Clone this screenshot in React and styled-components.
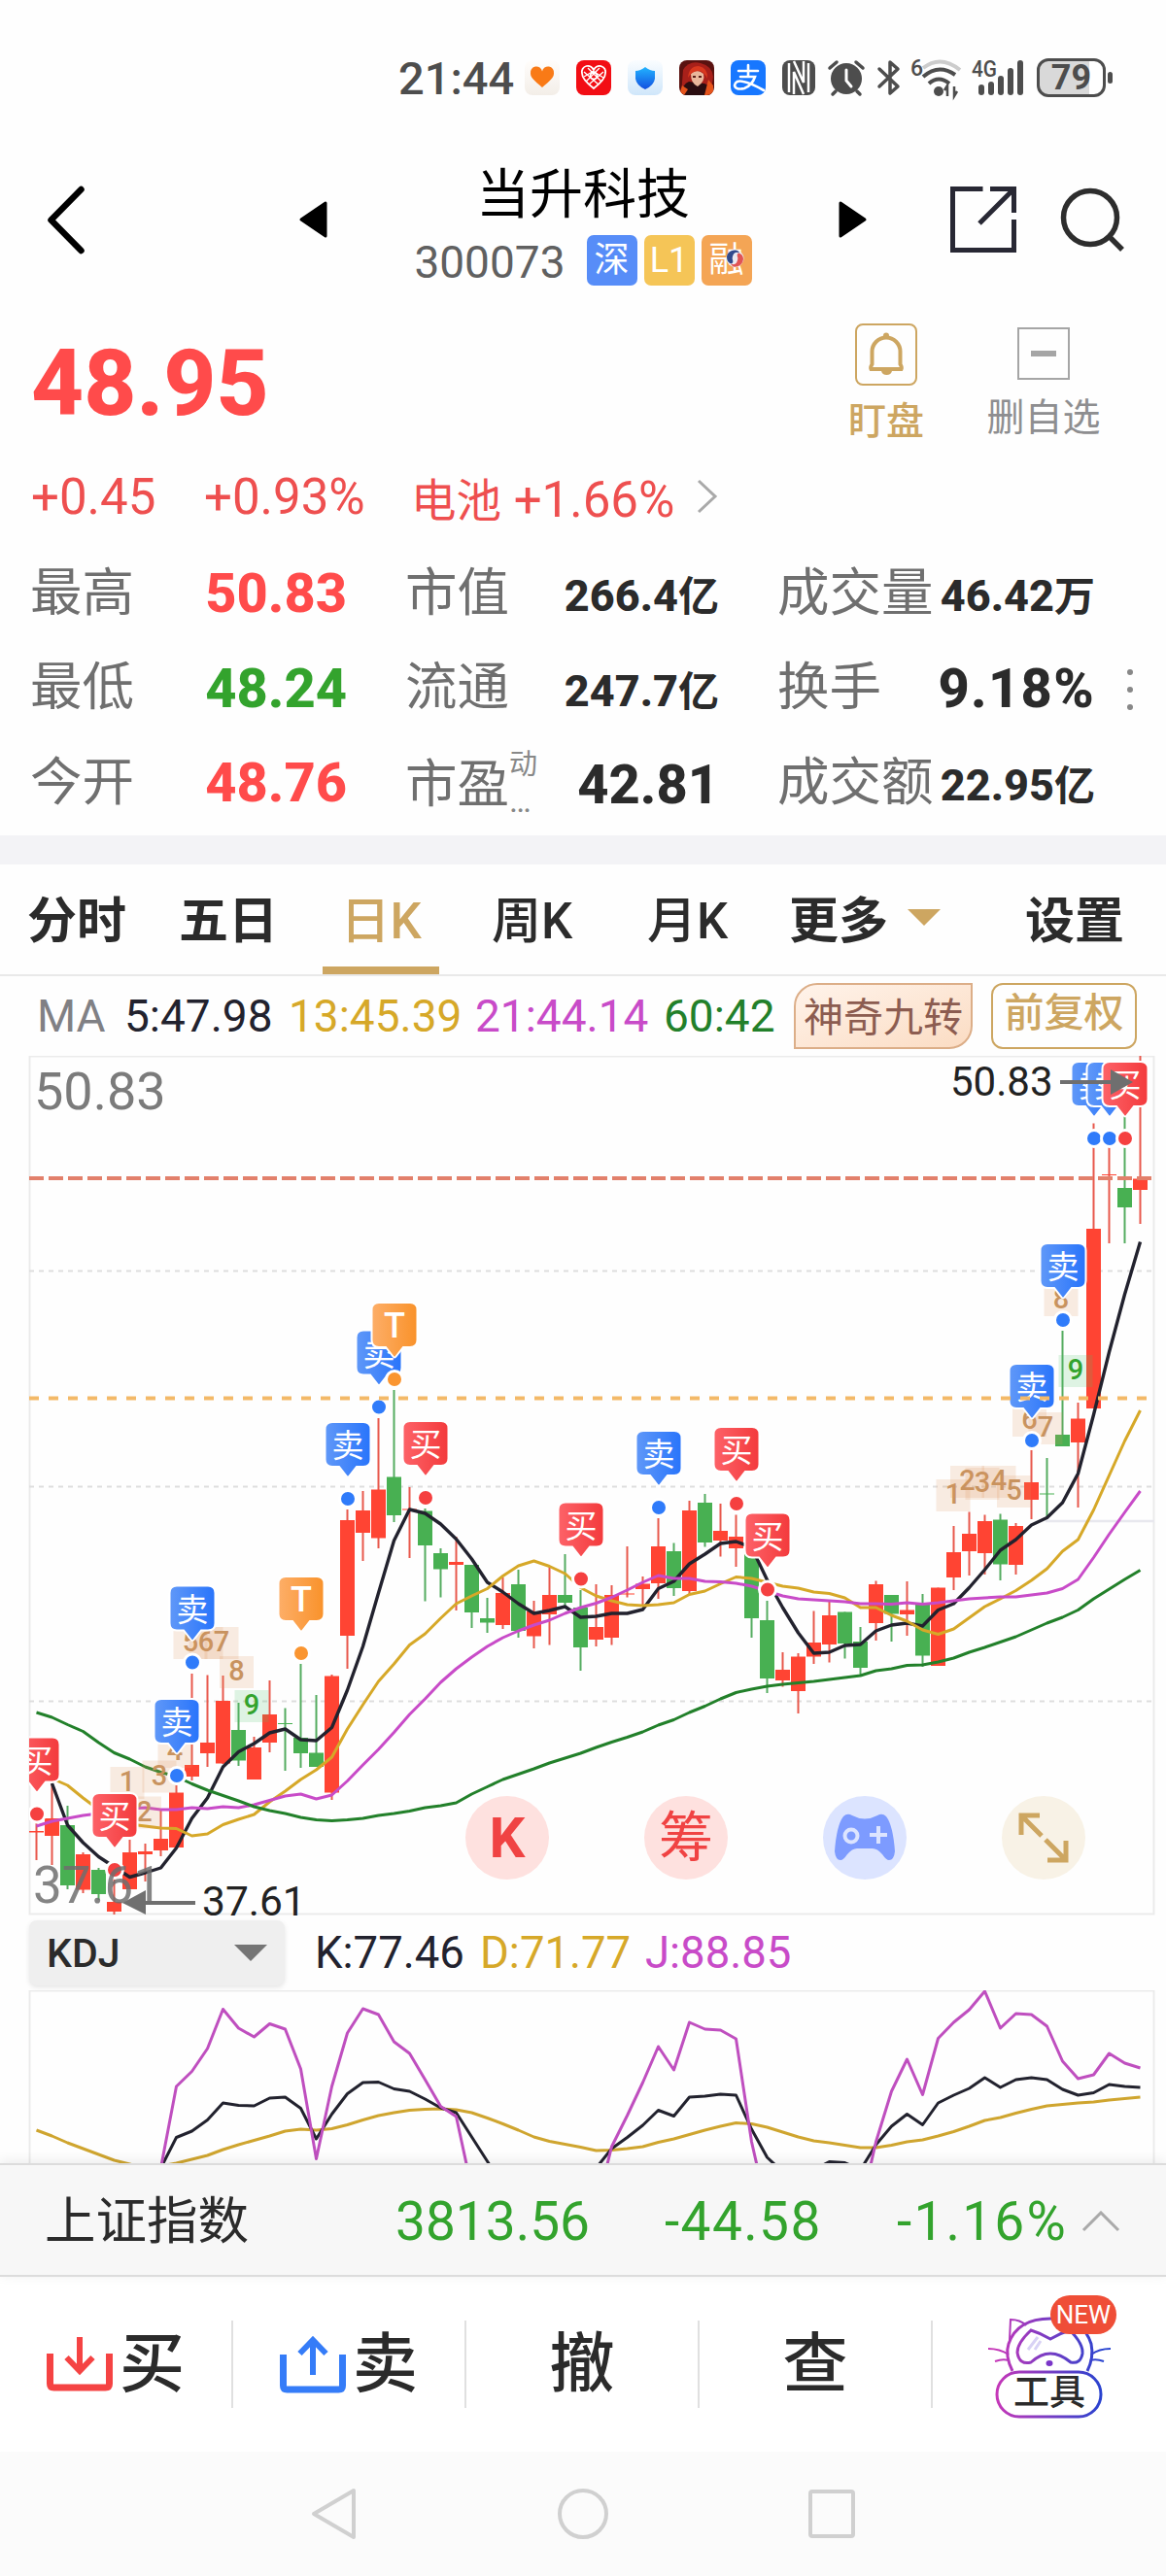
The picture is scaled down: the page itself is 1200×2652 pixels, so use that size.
import React from 'react'
import styled, { createGlobalStyle, css } from 'styled-components'

const GlobalStyle = createGlobalStyle`
  * {
    box-sizing: border-box;
  }
  body {
    margin: 0;
    background: #fefefe;
    font-family: Roboto, 'Noto Sans CJK SC', sans-serif;
    color: #2b2b2b;
  }
  svg {
    display: block;
    flex: none;
  }
`

const RED = '#ff4b4b'
const GREEN = '#33a32d'
const GOLD = '#cda661'
const INK = '#22222e'
const YELLOW = '#d6a828'
const PURPLE = '#c84bc8'
const FOREST = '#22802a'

const Screen = styled.div`
  width: 1200px;
  height: 2652px;
  overflow: hidden;
  display: flex;
  flex-direction: column;
  white-space: nowrap;
`

/* ---------- status bar ---------- */

const StatusBar = styled.div`
  display: flex;
  align-items: center;
  height: 140px;
  padding: 20px 0 0 410px;
  color: #4d4d4d;
`

const Clock = styled.div`
  width: 130px;
  font-size: 47px;
  font-weight: 500;
  line-height: 1;
`

const AppIcon = styled.div`
  flex: none;
  width: 36px;
  height: 36px;
  margin-right: 17px;
  border-radius: 8px;
  overflow: hidden;
  background: ${props => props.bg};
`

const StatusSlot = styled.div`
  flex: none;
  width: ${props => props.width}px;

  & > svg {
    overflow: visible;
  }
`

const Battery = styled.div`
  position: relative;
  width: 71px;
  height: 40px;
  border: 3px solid #4d4d4d;
  border-radius: 12px;
  background: linear-gradient(90deg, #d9d9d9 79%, #fff 79%);
  font-size: 36px;
  font-weight: 700;
  line-height: 35px;
  text-align: center;

  &::after {
    content: '';
    position: absolute;
    right: -10px;
    top: 11px;
    width: 5px;
    height: 12px;
    border-radius: 3px;
    background: #4d4d4d;
  }
`

/* ---------- header ---------- */

const Header = styled.header`
  display: flex;
  align-items: flex-start;
  height: 170px;
  padding: 49px 39px 0 47px;
`

const HeaderSlot = styled.div`
  width: ${props => props.width}px;
  padding-top: ${props => props.top || 0}px;
`

const Title = styled.div`
  width: 551px;
  margin-top: -29px;
  text-align: center;
  padding-right: 34px;
`

const Name = styled.div`
  font-size: 55px;
  line-height: 80px;
  color: #000;
`

const CodeRow = styled.div`
  display: flex;
  justify-content: center;
  align-items: center;
  gap: 7px;
  margin-top: 2px;
  height: 52px;
  font-size: 46px;
  color: #606060;

  & > span {
    margin-right: 15px;
    padding-top: 3px;
  }
`

const Tag = styled.div`
  position: relative;
  width: 52px;
  height: 52px;
  border-radius: 7px;
  background: ${props => props.bg};
  color: #fff;
  font-size: 36px;
  line-height: 52px;
  text-align: center;

  & > svg {
    position: absolute;
    left: 25px;
    top: 14px;
  }
`

/* ---------- quote ---------- */

const Quote = styled.section`
  display: flex;
  height: 150px;
  padding: 0 34px 0 32px;
`

const Price = styled.div`
  flex: 1;
  font-size: 94px;
  font-weight: 800;
  line-height: 171px;
  color: ${RED};
`

const QuoteAction = styled.div`
  display: flex;
  flex-direction: column;
  align-items: center;
  width: ${props => props.width}px;
  padding-top: ${props => props.top}px;
  font-size: 39px;
  line-height: 60px;
  font-weight: ${props => props.weight || 400};
  color: ${props => props.color};
  gap: ${props => props.gap}px;
`

const ChangeRow = styled.div`
  display: flex;
  align-items: center;
  height: 102px;
  padding-left: 32px;
  font-size: 51px;
  color: #ee4f4f;
`

const Change = styled.span`
  width: ${props => props.width}px;

  & > b {
    font-size: 46.5px;
    font-weight: 400;
  }
`

const Stats = styled.section`
  position: relative;
  display: grid;
  grid-template-columns: 326px 323px 327px;
  grid-auto-rows: 97.5px;
  column-gap: 60px;
  height: 298px;
  padding: 0 0 0 31px;
`

const Stat = styled.div`
  display: flex;
  justify-content: space-between;
  align-items: center;
  padding-top: ${props => (props.low ? 4 : 0)}px;
`

const StatLabel = styled.div`
  display: flex;
  font-size: 53.5px;
  line-height: 80px;
  color: #6f6f6f;
`

const StatNote = styled.div`
  display: flex;
  flex-direction: column;
  justify-content: space-between;
  font-size: 29px;
  line-height: 38px;
  color: #888;

  & > i {
    font-style: normal;
    font-size: 34px;
    line-height: 20px;
    padding-bottom: 14px;
  }
`

const StatValue = styled.div`
  font-size: ${props => (props.small ? 45 : 56)}px;
  font-weight: 800;
  line-height: 80px;
  letter-spacing: ${props => props.tracking || 0}px;
  padding-top: ${props => (props.small ? 8 : 1)}px;
  color: ${props => props.color || '#2b2b2b'};

  & > span {
    font-size: 42px;
    font-weight: 700;
  }
`

const MoreDots = styled.div`
  position: absolute;
  left: 1160px;
  top: 127px;
  display: grid;
  gap: 12px;

  & > i {
    width: 6px;
    height: 6px;
    border-radius: 50%;
    background: #888;
  }
`

const Band = styled.div`
  height: 30px;
  background: #f3f3f6;
`

/* ---------- period tabs ---------- */

const Tabs = styled.nav`
  display: flex;
  height: 115px;
  padding-left: 28px;
  border-bottom: 2px solid #e9e9e9;
`

const Tab = styled.div`
  display: flex;
  align-items: center;
  width: ${props => props.width}px;
  padding-bottom: 5px;
  font-size: 51px;
  font-weight: ${props => (props.heavy ? 700 : 500)};
  color: #2b2b2b;

  ${props =>
    props.active &&
    css`
      justify-content: center;
      color: ${GOLD};
      margin-right: 54px;
      border-bottom: 8px solid ${GOLD};
      padding: 8px 0 5px;
    `};
`

const Caret = styled.i`
  margin-left: ${props => props.gap || 0}px;
  border: 17px solid transparent;
  border-top-color: ${props => props.color};
  border-bottom: 0;
`

/* ---------- indicators ---------- */

const MaRow = styled.div`
  display: flex;
  align-items: center;
  height: 82px;
  padding-left: 38px;
  font-size: 46px;
`

const Value = styled.span`
  width: ${props => props.width}px;
  letter-spacing: ${props => props.tracking || 0}px;
  color: ${props => props.color};
`

const NineTurn = styled.div`
  width: 184px;
  height: 68px;
  margin-right: 19px;
  border: 2px solid #dcae88;
  border-radius: 24px 0;
  background: linear-gradient(160deg, #fff3ea, #fbdcc3);
  color: #8c5c50;
  font-size: 41px;
  line-height: 68px;
  text-align: center;
`

const Adjust = styled.div`
  width: 150px;
  height: 68px;
  border: 2px solid ${GOLD};
  border-radius: 12px;
  color: ${GOLD};
  font-size: 41px;
  font-weight: 500;
  line-height: 59px;
  text-align: center;
`

const ChartBox = styled.div`
  position: relative;
  height: 885px;
`

const FloatButtons = styled.div`
  position: absolute;
  left: 479px;
  top: 762px;
  display: flex;
  gap: 98px;
`

const FloatButton = styled.div`
  display: flex;
  align-items: center;
  justify-content: center;
  width: 86px;
  height: 86px;
  border-radius: 50%;
  background: ${props => props.bg};
  color: #f04343;
  font-size: ${props => props.size || 56}px;
  font-weight: ${props => props.weight || 400};
  line-height: 86px;
`

const KdjRow = styled.div`
  display: flex;
  align-items: center;
  height: 77px;
  padding-left: 30px;
  font-size: 45.5px;
`

const Select = styled.div`
  display: flex;
  align-items: center;
  justify-content: space-between;
  width: 263px;
  height: 67px;
  margin-right: 31px;
  padding: 0 18px;
  border-radius: 8px;
  background: #efefef;
  box-shadow: 0 2px 5px rgba(0, 0, 0, 0.1);
  font-size: 41px;
  font-weight: 500;
`

/* ---------- bottom ---------- */

const IndexBar = styled.div`
  position: relative;
  display: flex;
  align-items: center;
  height: 117px;
  padding: 3px 0 0 46px;
  border-top: 2px solid #dcdcdc;
  border-bottom: 2px solid #dcdcdc;
  background: #f7f7f7;
  box-shadow: 0 -2px 12px rgba(0, 0, 0, 0.08);
  font-size: 55px;
  color: ${GREEN};
`

const IndexName = styled.div`
  width: 361px;
  font-size: 52.5px;
  line-height: 80px;
  color: #2b2b2b;
`

const Actions = styled.div`
  display: flex;
  align-items: center;
  height: 180px;
  background: #fff;
`

const Action = styled.div`
  display: flex;
  align-items: center;
  justify-content: center;
  gap: 7px;
  width: 240px;
  height: 90px;
  border-right: ${props => (props.last ? 0 : '2px solid #e0e0e0')};
  font-size: 67px;
  font-weight: 500;
  line-height: 92px;
`

const Tool = styled.div`
  position: relative;
  width: 130px;
  height: 128px;
  margin-top: -14px;
  font-size: 37px;
`

const ToolLabel = styled.div`
  position: absolute;
  left: 11px;
  top: 77px;
  width: 108px;
  line-height: 48px;
  text-align: center;
`

const NewBadge = styled.div`
  position: absolute;
  left: 66px;
  top: 0;
  width: 68px;
  height: 40px;
  border-radius: 20px;
  background: #ef4e37;
  color: #fff;
  font-size: 26px;
  font-weight: 400;
  line-height: 41px;
  text-align: center;
`

const NavBar = styled.div`
  display: flex;
  align-items: center;
  justify-content: center;
  gap: 205px;
  height: 128px;
  background: #fbfbfb;
`

/* ---------- chart data, in pixels of the screen ---------- */

// [direction, body top, body bottom, high, low]
const candles = [
  ['u', 1885, 1886.5, 1871, 1915], ['u', 1872, 1890, 1836, 1920], ['d', 1879, 1941, 1859, 1945],
  ['u', 1909, 1945.5, 1907, 1949], ['d', 1925, 1950, 1923, 1956], ['u', 1958, 1968, 1934, 1971],
  ['u', 1907, 1945, 1894, 1945], ['u', 1906, 1909, 1898, 1937], ['u', 1893, 1905, 1862, 1911],
  ['u', 1845.5, 1902, 1838, 1902], ['u', 1817, 1829, 1723, 1833], ['u', 1794, 1805, 1724.5, 1819],
  ['u', 1751, 1815.5, 1725, 1816], ['d', 1781, 1812.5, 1753, 1818], ['u', 1799, 1832, 1788, 1832],
  ['u', 1765, 1794, 1730, 1804], ['d', 1774, 1775, 1758.5, 1823], ['d', 1789, 1805, 1713, 1820],
  ['d', 1804.5, 1819, 1745, 1819], ['u', 1725.5, 1845.5, 1724, 1853], ['u', 1565, 1684, 1554, 1718],
  ['u', 1555, 1578, 1535, 1607], ['u', 1533.5, 1583.5, 1460, 1594], ['d', 1520.5, 1560, 1431, 1567],
  ['u', 1553.5, 1554.5, 1531, 1604], ['d', 1555.5, 1591, 1553, 1648.5], ['d', 1599, 1615.5, 1594, 1644.5],
  ['u', 1608, 1611, 1582, 1658], ['d', 1611, 1660, 1611, 1676], ['d', 1666, 1670.5, 1645, 1681],
  ['u', 1640, 1673, 1624, 1677], ['d', 1631, 1679, 1616, 1686], ['u', 1659, 1684.5, 1648, 1697],
  ['u', 1642, 1662, 1613.5, 1693.5], ['d', 1642, 1650, 1600, 1655], ['d', 1655, 1696, 1637, 1720],
  ['u', 1675, 1688, 1631, 1695], ['u', 1642, 1686, 1632, 1693.5], ['u', 1640.5, 1641.5, 1592, 1644.5],
  ['u', 1630.5, 1636, 1623, 1653], ['u', 1592, 1630, 1563, 1646], ['d', 1597, 1635, 1588.5, 1643],
  ['u', 1555, 1638, 1545, 1641], ['d', 1547, 1588, 1538, 1592.5], ['u', 1576, 1586, 1548, 1602.5],
  ['u', 1582, 1594, 1559.5, 1613], ['d', 1590, 1666, 1590, 1686], ['d', 1668, 1728, 1648, 1743],
  ['u', 1719, 1730, 1701, 1736.5], ['u', 1705.5, 1741, 1702, 1764], ['u', 1691, 1705.5, 1658.5, 1713],
  ['u', 1663, 1693, 1649, 1711.5], ['d', 1659.5, 1692, 1659.5, 1707.5], ['d', 1690, 1717, 1675, 1725],
  ['u', 1631, 1671, 1627.5, 1689], ['d', 1642, 1661.5, 1642, 1690], ['u', 1657.5, 1662, 1628, 1684],
  ['d', 1651, 1704.5, 1641, 1716], ['u', 1634.5, 1715, 1634.5, 1715], ['u', 1598, 1624, 1571, 1637],
  ['u', 1579, 1597, 1556.5, 1622], ['u', 1566, 1599, 1559.5, 1621], ['d', 1564.5, 1610.5, 1558.5, 1627],
  ['u', 1571, 1611, 1568, 1621], ['u', 1526, 1544, 1493, 1564], ['d', 1537.5, 1538.5, 1501, 1561],
  ['d', 1477, 1489, 1370, 1489], ['u', 1460.5, 1485, 1444, 1552], ['u', 1265, 1450, 1156.5, 1450],
  ['u', 1209, 1210, 1172, 1280], ['d', 1223, 1243, 1146, 1280], ['u', 1213.5, 1225, 1087, 1260],
]

const ma5 = [
  1836, 1879, 1897, 1911.5, 1922, 1932.5, 1928, 1923, 1902.5, 1872, 1851, 1819, 1803.5, 1795, 1784, 1780, 1791,
  1792, 1778.5, 1740, 1695, 1640, 1586, 1554, 1558, 1569, 1584.5, 1605, 1629, 1639, 1651, 1661, 1658, 1654, 1665,
  1664, 1661, 1661, 1657, 1635.5, 1628, 1610, 1600, 1589, 1587, 1593, 1626.5, 1655, 1681, 1702, 1701, 1694, 1693,
  1679, 1673, 1671, 1674, 1657.5, 1651, 1634.5, 1616, 1596, 1585, 1570, 1562.5, 1547, 1517, 1456.5, 1392, 1332.5,
  1278.5,
]
const ma13 = [
  1831, 1838, 1851, 1863, 1871, 1878, 1880, 1882, 1882.5, 1890, 1888, 1878.5, 1873, 1868, 1855, 1844, 1832, 1822,
  1809, 1780, 1755, 1731, 1713, 1693.5, 1682, 1666, 1651, 1643, 1635.5, 1622.5, 1612, 1607, 1612.5, 1620, 1634.5,
  1643, 1648, 1652, 1653, 1652, 1650, 1641.5, 1638, 1630.5, 1623.5, 1625, 1629, 1633, 1635, 1639, 1640.5, 1645, 1655,
  1655, 1663, 1669, 1678, 1682.5, 1677, 1665.5, 1654, 1646, 1637.5, 1627, 1615, 1597, 1585, 1554.5, 1519, 1483.5,
  1452,
]
const ma21 = [
  1880, 1875, 1872, 1869, 1867, 1865, 1862, 1861, 1863, 1863, 1861, 1862, 1860, 1861, 1858, 1853.5, 1849, 1847, 1852,
  1848, 1833.5, 1817, 1801, 1783.5, 1765, 1749, 1732, 1718, 1706, 1695, 1686, 1679, 1673, 1668, 1661, 1655, 1650.5,
  1644.5, 1637, 1629, 1622, 1625, 1625, 1628, 1628.5, 1630, 1633, 1638, 1643, 1646, 1647, 1648, 1649, 1651, 1651,
  1651.5, 1650, 1651.5, 1650, 1648, 1646, 1645, 1644, 1644, 1642, 1640, 1635.5, 1626, 1603.5, 1579.5, 1557, 1535,
]
const ma60 = [
  1763, 1768, 1775.5, 1782.5, 1794, 1804.5, 1811, 1819, 1824.5, 1829, 1836.5, 1843, 1848.5, 1854, 1860, 1864, 1867,
  1871, 1873.5, 1874.5, 1873.5, 1872, 1869, 1867, 1864.5, 1861, 1859, 1856, 1847, 1839.5, 1832, 1826.5, 1821, 1815,
  1810, 1805, 1799, 1793.5, 1788.5, 1783, 1776, 1770.5, 1763, 1756.5, 1749, 1742.5, 1739, 1736, 1734, 1732.5, 1731,
  1729, 1727, 1725, 1720, 1718, 1714.5, 1714, 1711, 1707, 1701, 1696, 1690.5, 1685, 1678, 1671, 1665, 1657.5, 1646,
  1636, 1626, 1616.5,
]

const kLine = [
  2232, 2200.5, 2194, 2182.5, 2165, 2167.5, 2168, 2160, 2159, 2170.5, 2202, 2176.5, 2155.5, 2144, 2143.5, 2150.5,
  2153, 2161, 2170, 2175, 2200, 2225, 2250, 2260, 2264, 2266, 2266, 2254, 2232, 2212, 2200.5, 2188, 2172.5, 2178.5,
  2159, 2158, 2156, 2157, 2192, 2221, 2236, 2242, 2234, 2225.5, 2226.5, 2234, 2208, 2189, 2176.5, 2187.5, 2165, 2157,
  2150, 2139, 2149, 2141, 2139, 2141, 2151, 2157, 2154.5, 2146, 2148, 2149,
]
const dLine = [
  2193, 2199, 2206, 2212, 2218, 2224, 2228, 2232, 2230, 2227, 2223, 2219, 2213, 2208, 2203.5, 2199, 2194, 2192, 2193,
  2191.5, 2187.5, 2182.5, 2178, 2175, 2172.5, 2171.5, 2171, 2172, 2175, 2180.5, 2186.5, 2193, 2200, 2204.5, 2207.5,
  2210.5, 2214, 2213.5, 2212, 2210, 2205.5, 2202, 2197.5, 2193, 2189, 2185.5, 2186.5, 2190, 2195, 2200, 2204, 2206,
  2208.5, 2211, 2211, 2208.5, 2205, 2203, 2199, 2194.5, 2189, 2183, 2180, 2175.5, 2171.5, 2168, 2166.5, 2165, 2164,
  2162, 2160.5, 2159,
]
const jLine = [
  2232, 2148, 2132.5, 2109, 2068.5, 2088, 2097, 2083.5, 2089, 2130, 2222.5, 2148, 2093, 2068, 2074, 2102, 2114, 2141,
  2168.5, 2179, 2253, 2300, 2320, 2340, 2340, 2340, 2330, 2310, 2274, 2210, 2178, 2144, 2107, 2131, 2082, 2089, 2090,
  2099, 2205, 2275, 2290, 2300, 2290, 2260, 2250, 2275, 2205, 2153, 2120, 2156.5, 2098.5, 2082, 2069, 2050, 2088,
  2073, 2074, 2086, 2122, 2140, 2136, 2114, 2124, 2129,
]

// [candle index, kind, top of the bubble]
const markers = [
  [0, 'buy', 1788.5], [5, 'buy', 1846], [9, 'sell', 1749], [10, 'sell', 1632.5], [17, 't', 1623],
  [20, 'sell', 1464], [22, 'sell', 1369.5], [23, 't', 1341], [25, 'buy', 1463], [35, 'buy', 1546.5],
  [40, 'sell', 1473], [45, 'buy', 1469], [47, 'buy', 1557.5], [64, 'sell', 1404], [66, 'sell', 1280],
  [68, 'sell', 1093], [69, 'sell', 1093], [70, 'buy', 1093],
]

// [digit, centre x, baseline]
const turns = [
  [1, 131, 1844], [2, 148.5, 1874.5], [3, 164, 1837.5], [4, 180, 1812], [5, 196, 1700], [6, 212, 1700],
  [7, 228, 1700], [8, 243.5, 1730], [9, 259, 1765], [1, 981, 1548], [2, 995.5, 1534], [3, 1011, 1536],
  [4, 1028, 1534], [5, 1043.5, 1544], [6, 1059.5, 1471], [7, 1076, 1479], [8, 1092, 1347], [9, 1107, 1420],
]

const kinds = {
  buy: { text: '买', dot: '#f54040' },
  sell: { text: '卖', dot: '#2f7bfa' },
  t: { text: 'T', dot: '#fa9530' },
}

const xAt = i => 37.5 + 16 * i

const Line = ({ data, start = 0, color, width = 3 }) => (
  <polyline
    points={data.map((y, i) => `${xAt(i + start)},${y}`).join(' ')}
    fill="none"
    stroke={color}
    strokeWidth={width}
    strokeLinejoin="round"
  />
)

const Candle = ({ x, data: [dir, top, bottom, high, low] }) => (
  <g fill={dir === 'u' ? '#ff4433' : '#48b052'}>
    <rect x={x - 1} y={high} width="2" height={low - high} fill={dir === 'u' ? '#e8584c' : '#55ac60'} />
    <rect x={x - 7.5} y={top} width="15" height={bottom - top} />
  </g>
)

const Marker = ({ x, kind, top }) => (
  <g transform={`translate(${x + 0.5} ${top})`}>
    <path
      d="M-16 0H16Q23.500 0 23.500 7.500V38.500Q23.500 46 16 46H9L1.500 55.500Q0 57.500 -1.500 55.500L-9 46H-16Q-23.500 46 -23.500 38.500V7.500Q-23.500 0 -16 0Z"
      fill={`url(#${kind})`}
      stroke="#fff"
      strokeWidth="2"
    />
    <text
      x="0"
      y="36"
      fontSize={kind === 't' ? 36 : 33}
      fontWeight={kind === 't' ? 500 : 400}
      fill="#fff"
      textAnchor="middle"
    >
      {kinds[kind].text}
    </text>
    <circle cy="79" r="8.500" fill={kinds[kind].dot} stroke="#fff" strokeWidth="3" />
  </g>
)

const MainChart = () => (
  <svg width="1200" height="885" viewBox="0 1087 1200 885">
    <defs>
      <linearGradient id="buy">
        <stop offset="0" stopColor="#fd6268" />
        <stop offset="1" stopColor="#f33a3c" />
      </linearGradient>
      <linearGradient id="sell">
        <stop offset="0" stopColor="#6098f8" />
        <stop offset="1" stopColor="#2874fb" />
      </linearGradient>
      <linearGradient id="t">
        <stop offset="0" stopColor="#fdae68" />
        <stop offset="1" stopColor="#f9922a" />
      </linearGradient>
      <clipPath id="frame">
        <rect x="30" y="1087" width="1160" height="885" />
      </clipPath>
    </defs>
    <rect x="30.500" y="1087.500" width="1157" height="883" fill="none" stroke="#ebebeb" strokeWidth="2" />
    {[1308.5, 1530.5, 1751.5].map(y => (
      <line key={y} x1="30" x2="1188" y1={y} y2={y} stroke="#dedede" strokeWidth="2" strokeDasharray="5 5" />
    ))}
    <line x1="1076" x2="1188" y1="1566" y2="1566" stroke="#e8e8ee" strokeWidth="2.500" />
    <g clipPath="url(#frame)">
      {candles.map((c, i) => (
        <Candle key={i} x={xAt(i)} data={c} />
      ))}
      <Line data={ma5} start={1} color={INK} width={3.4} />
      <Line data={ma13} start={1} color={YELLOW} />
      <Line data={ma21} color={PURPLE} />
      <Line data={ma60} color={FOREST} />
      {turns.map(([n, x, y]) => (
        <g key={`${n}-${x}`}>
          <rect x={x - 17.5} y={y - 25} width="35" height="33" fill={n === 9 ? '#4ec06c' : '#e0945c'} opacity="0.18" />
          <text x={x} y={y} fontSize="29" fontWeight="500" textAnchor="middle" fill={n === 9 ? GREEN : '#c8935f'}>
            {n}
          </text>
        </g>
      ))}
      {markers.map(([i, kind, top]) => (
        <Marker key={i} x={xAt(i)} kind={kind} top={top} />
      ))}
    </g>
    <line x1="30" x2="1186" y1="1213" y2="1213" stroke="#e2806b" strokeWidth="4" strokeDasharray="15 5" />
    <line x1="30" x2="1186" y1="1439.500" y2="1439.500" stroke="#f3b968" strokeWidth="4" strokeDasharray="10 10" />
    <text x="35" y="1142" fontSize="54" fill="#7b7b7b">50.83</text>
    <text x="34" y="1959" fontSize="53" fill="#6f6f6f" fillOpacity="0.85">37.61</text>
    <g fill="#6f6f6f">
      <path d="M1091 1112h52v-11l23 13-23 13v-11h-52z" />
      <path d="M201 1957h-51v-11l-24 13 24 12v-10h51z" />
    </g>
    <text x="978" y="1128" fontSize="42" fill="#222">50.83</text>
    <text x="208" y="1972" fontSize="42.500" fill="#222">37.61</text>
  </svg>
)

const SubChart = () => (
  <svg width="1200" height="178" viewBox="0 2049 1200 178">
    <path d="M30.500 2228V2049.500H1187.500V2228" fill="none" stroke="#ebebeb" strokeWidth="2" />
    <Line data={dLine} color="#cfa52f" />
    <Line data={kLine} start={8} color={INK} />
    <Line data={jLine} start={8} color="#bf4fbf" />
  </svg>
)

/* ---------- icons ---------- */

const StatusIcons = () => (
  <>
    <AppIcon bg="linear-gradient(#fffdfb, #f3eee8)">
      <svg width="36" height="36">
        <path d="M18 28C10 21 6 18 6 13.500a6 6 0 0 1 12-2 6 6 0 0 1 12 2C30 18 26 21 18 28z" fill="#f97a16" />
      </svg>
    </AppIcon>
    <AppIcon bg="#f20d14">
      <svg width="36" height="36" fill="none" stroke="#fff" strokeWidth="1.800">
        <path d="M18 29C9 22 6 18 6 13.500a6 6 0 0 1 12-3 6 6 0 0 1 12 3C30 18 27 22 18 29z" />
        <path d="M8 12l15 13M12 8l14 14M17 11l11 7M28 12L13 25M24 8L10 22M18 11L8 17" strokeWidth="1.400" />
        <circle cx="18" cy="16" r="3.500" />
      </svg>
    </AppIcon>
    <AppIcon bg="linear-gradient(#fafdff, #cfe6fa)">
      <svg width="36" height="36">
        <defs>
          <linearGradient id="shield" x1="0" x2="0" y1="0" y2="1">
            <stop offset="0" stopColor="#22b4ff" />
            <stop offset="1" stopColor="#124fe0" />
          </linearGradient>
        </defs>
        <path d="M18 7q5 4 10 4v8q-1 7-10 11-9-4-10-11v-8q5 0 10-4z" fill="url(#shield)" />
      </svg>
    </AppIcon>
    <AppIcon bg="#5a1210">
      <svg width="36" height="36">
        <path d="M4 10Q10 0 22 3t13 14l-3 19H2z" fill="#a8201a" />
        <path d="M3 36q0-12 7-14l16 2q7 2 9 12z" fill="#2a0d10" />
        <path d="M12 14q6-6 13 0 2 8-6 13-7-3-7-13z" fill="#e9b79b" />
        <path d="M9 18q1-12 11-12 10 2 9 13-4-8-9-8-7 0-11 7z" fill="#d8381f" />
        <path d="M26 36l4-16 5 6v10zM3 26l6 4-4 6H0z" fill="#e5541c" />
        <path d="M14 17h3M20 17h3" stroke="#5a2018" strokeWidth="2" />
      </svg>
    </AppIcon>
    <AppIcon bg="#1777ff">
      <svg width="36" height="36" fill="none" stroke="#fff" strokeWidth="2.600" strokeLinecap="round">
        <path d="M8 11h20M18 5v12M10 17h15q-3 9-11 12-9 2-10-3 1-6 9-4 7 1 21 9" />
      </svg>
    </AppIcon>
    <StatusSlot width={47}>
      <svg width="34" height="36" fill="none" stroke="#fff" strokeWidth="2.500">
        <rect width="34" height="36" rx="8" fill="#4d4d4d" stroke="none" />
        <path d="M7 33V3M27 33V3M12 35V12l10 23M12 1l10 22V1" />
      </svg>
    </StatusSlot>
    <StatusSlot width={51}>
      <svg width="38" height="38" fill="none" stroke="#4d4d4d" strokeWidth="3.500" strokeLinecap="round">
        <circle cx="19" cy="20" r="16" fill="#4d4d4d" stroke="none" />
        <path d="M2 9l7-6M36 9l-7-6M8 33l-3 3M30 33l3 3" />
        <path d="M19 11v11l5 6" stroke="#fff" strokeWidth="3" />
      </svg>
    </StatusSlot>
    <StatusSlot width={34}>
      <svg width="24" height="38" fill="none" stroke="#4d4d4d" strokeWidth="3.500" strokeLinejoin="round" strokeLinecap="round">
        <path d="M2 10l19 18-8 7V3l8 7L2 28" />
      </svg>
    </StatusSlot>
    <StatusSlot width={63}>
      <svg width="54" height="40" fill="none" stroke="#4d4d4d" strokeWidth="4">
        <text x="0" y="18" fontSize="23" fontWeight="500" fill="#4d4d4d" stroke="none">6</text>
        <path d="M13 10q18-14 38 2" stroke="#ccc" />
        <path d="M13 19q16-14 33-2M19 26q10-9 21 0" />
        <circle cx="29" cy="34" r="5" fill="#4d4d4d" stroke="none" />
        <path d="M38 39V28l-3 5M45 29v10l3-5" strokeWidth="2.500" />
      </svg>
    </StatusSlot>
    <StatusSlot width={67}>
      <svg width="56" height="40" fill="#4d4d4d">
        <text x="0" y="19" fontSize="23" fontWeight="500" textLength="26" lengthAdjust="spacingAndGlyphs">4G</text>
        <rect x="7" y="27" width="6" height="11" rx="3" />
        <rect x="17" y="24" width="6" height="14" rx="3" />
        <rect x="27" y="18" width="6" height="20" rx="3" />
        <rect x="37" y="10" width="6" height="28" rx="3" />
        <rect x="47" y="2" width="6" height="36" rx="3" />
      </svg>
    </StatusSlot>
  </>
)

const Swirl = () => (
  <svg width="19" height="20" viewBox="0 0 19 20">
    <circle cx="9.500" cy="10" r="9" fill="#eceaf0" />
    <path d="M2 13Q-1 6 5 2.500q7-3 9 2-4-2-6 1-2 4-1 6 1 3-1 4-2 0-4-2.500z" fill="#324a8c" />
    <path d="M17 7q3 6-3 10.500-7 3-9-2 4 2 6-1 2-4 1-6-1-3 1-4 2 0 4 2.500z" fill="#e25454" />
  </svg>
)

const CatIcon = () => (
  <svg width="130" height="128" fill="none" stroke="url(#cat)" strokeWidth="3">
    <defs>
      <linearGradient id="cat" gradientUnits="userSpaceOnUse" x1="10" x2="120" y1="60" y2="60">
        <stop offset="0" stopColor="#c637b8" />
        <stop offset="1" stopColor="#2743cf" />
      </linearGradient>
    </defs>
    <rect x="11" y="79" width="107" height="46" rx="23" fill="#fff" />
    <path d="M27 78Q19 62 23 50q9-26 43-26t42 26q3 14-4 28" />
    <path d="M24 46l1-21q10 0 16 6" strokeWidth="2" />
    <path d="M46 36q10 3 20 9 10-6 20-9 14 14 13 24-2 11-12 9-11-9-21-9t-20 9q-12 3-14-10 0-10 14-23z" />
    <path d="M2 55q12 0 21 6M9 68q8-3 14-1M128 55q-12 0-20 6M121 68q-8-3-14-1" strokeWidth="2" />
    <path d="M43 56l10-13M50 56l6-9" stroke="#d8d2f5" />
    <ellipse cx="65" cy="70" rx="3.500" ry="3" fill="#7a35c8" stroke="none" />
  </svg>
)

const cells = [
  ['最高', '50.83', '', RED],
  ['市值', '266.4', '亿'],
  ['成交量', '46.42', '万'],
  ['最低', '48.24', '', GREEN],
  ['流通', '247.7', '亿'],
  ['换手', '9.18%', ''],
  ['今开', '48.76', '', RED],
  ['市盈', '42.81', ''],
  ['成交额', '22.95', '亿'],
]

export default function App() {
  return (
    <Screen>
      <GlobalStyle />
      <StatusBar>
        <Clock>21:44</Clock>
        <StatusIcons />
        <Battery>79</Battery>
      </StatusBar>

      <Header>
        <HeaderSlot width={260}>
          <svg width="42" height="74" fill="none" stroke="#000" strokeWidth="6.500" strokeLinecap="round" strokeLinejoin="round">
            <path d="M36.500 6L5.500 37.500l31 31.500" />
          </svg>
        </HeaderSlot>
        <HeaderSlot width={35} top={17}>
          <svg width="31" height="40">
            <path d="M3 20L28 3v34z" strokeWidth="3" stroke="#000" strokeLinejoin="round" />
          </svg>
        </HeaderSlot>
        <Title>
          <Name>当升科技</Name>
          <CodeRow>
            <span>300073</span>
            <Tag bg="#578df8">深</Tag>
            <Tag bg="#f5c557">L1</Tag>
            <Tag bg="#f4a555">
              融
              <Swirl />
            </Tag>
          </CodeRow>
        </Title>
        <HeaderSlot width={56} top={17}>
          <svg width="31" height="40" viewBox="30 0 31 40" overflow="visible">
            <path d="M28 20L3 3v34z" strokeWidth="3" stroke="#000" strokeLinejoin="round" />
          </svg>
        </HeaderSlot>
        <HeaderSlot width={30} />
        <HeaderSlot width={113} top={3}>
          <svg width="68" height="68" fill="none" stroke="#282834" strokeWidth="5">
            <path d="M33.500 2.500h-31v63h63V34M41 2.500h24.500V27M65 3L30 38" />
          </svg>
        </HeaderSlot>
        <svg width="70" height="70" fill="none" stroke="#2d2d2d" strokeWidth="5.500">
          <circle cx="31" cy="35" r="27.500" />
          <path d="M50 54l14 14" />
        </svg>
      </Header>

      <Quote>
        <Price>48.95</Price>
        <QuoteAction width={140} top={23} gap={7} color={GOLD} weight={500}>
          <svg width="64" height="64" fill="none" stroke={GOLD}>
            <rect x="1" y="1" width="62" height="62" rx="7" strokeWidth="2" />
            <path d="M16.500 47h31q1-2-1-5V29a14 14 0 0 0-29 0v13q-2 3-1 5z" strokeWidth="4" />
            <circle cx="32" cy="12.500" r="3" fill={GOLD} stroke="none" />
            <path d="M27 49h11q-1 4-5.500 4T27 49z" fill={GOLD} stroke="none" />
          </svg>
          盯盘
        </QuoteAction>
        <QuoteAction width={184} top={27} gap={9} color="#8e8e90">
          <svg width="54" height="54" fill="none" stroke="#a5a5a5">
            <rect x="1" y="1" width="52" height="52" strokeWidth="2" />
            <path d="M14 27h26" strokeWidth="6" />
          </svg>
          删自选
        </QuoteAction>
      </Quote>

      <ChangeRow>
        <Change width={178}>+0.45</Change>
        <Change width={213}>+0.93%</Change>
        <Change width={294}>
          <b>电池</b> +1.66%
        </Change>
        <svg width="22" height="36" fill="none" stroke="#a9a9a9" strokeWidth="3">
          <path d="M2 2l17 16L2 34" />
        </svg>
      </ChangeRow>

      <Stats>
        {cells.map(([label, value, unit, color]) => (
          <Stat key={label} low={label === '市盈'}>
            <StatLabel>
              {label}
              {label === '市盈' && (
                <StatNote>
                  动<i>…</i>
                </StatNote>
              )}
            </StatLabel>
            <StatValue small={unit} color={color} tracking={value.endsWith('%') ? 1.3 : 0}>
              {value}
              {unit && <span>{unit}</span>}
            </StatValue>
          </Stat>
        ))}
        <MoreDots>
          <i />
          <i />
          <i />
        </MoreDots>
      </Stats>

      <Band />

      <Tabs>
        <Tab width={156} heavy>分时</Tab>
        <Tab width={148} heavy>五日</Tab>
        <Tab width={120} active>日K</Tab>
        <Tab width={160}>周K</Tab>
        <Tab width={146}>月K</Tab>
        <Tab width={243} heavy>
          更多
          <Caret gap={20} color={GOLD} />
        </Tab>
        <Tab width={110} heavy>设置</Tab>
      </Tabs>

      <MaRow>
        <Value width={90} color="#808084">MA</Value>
        <Value width={169} color={INK}>5:47.98</Value>
        <Value width={192} color={YELLOW}>13:45.39</Value>
        <Value width={194} color={PURPLE}>21:44.14</Value>
        <Value width={134} color={FOREST}>60:42</Value>
        <NineTurn>神奇九转</NineTurn>
        <Adjust>前复权</Adjust>
      </MaRow>

      <ChartBox>
        <MainChart />
        <FloatButtons>
          <FloatButton bg="#fee1df" size={58} weight={700}>K</FloatButton>
          <FloatButton bg="#fee1df">筹</FloatButton>
          <FloatButton bg="#dce4ff">
            <svg width="64" height="50" viewBox="0 0 64 50">
              <path d="M10 3q4-4 9-1 13 7 26 0 5-3 9 1 7 9 9 36-1 9-6 9-3 0-7-6-5-6-10-6H24q-5 0-10 6-4 6-7 6-5 0-6-9Q3 12 10 3z" fill="#7d9bff" />
              <circle cx="18" cy="23" r="6.500" fill="none" stroke="#dce4ff" strokeWidth="4" />
              <path d="M46 13v18M37 22h18" stroke="#dce4ff" strokeWidth="4" />
            </svg>
          </FloatButton>
          <FloatButton bg="#f8f2e6">
            <svg width="52" height="52" fill="none" stroke={GOLD} strokeWidth="5">
              <path d="M22 3H3v20M3 3l21 21M30 49h19V29M49 49L28 28" />
            </svg>
          </FloatButton>
        </FloatButtons>
      </ChartBox>

      <KdjRow>
        <Select>
          KDJ
          <Caret color="#757575" />
        </Select>
        <Value width={170} color={INK}>K:77.46</Value>
        <Value width={170} color={YELLOW}>D:71.77</Value>
        <Value width={160} color={PURPLE}>J:88.85</Value>
      </KdjRow>
      <SubChart />

      <IndexBar>
        <IndexName>上证指数</IndexName>
        <Value width={277}>3813.56</Value>
        <Value width={239} tracking={1.4}>-44.58</Value>
        <Value width={190} tracking={2.2}>-1.16%</Value>
        <svg width="40" height="22" fill="none" stroke="#aaa" strokeWidth="3">
          <path d="M2 20L20 2l18 18" />
        </svg>
      </IndexBar>

      <Actions>
        <Action>
          <svg width="68" height="56" fill="none" stroke="#f54343" strokeWidth="7">
            <path d="M3.500 17v31q0 4 4 4h53q4 0 4-4V17" />
            <path d="M34 0v36M20.500 21L34 35l13.500-14" strokeWidth="6" />
          </svg>
          买
        </Action>
        <Action>
          <svg width="68" height="60" fill="none" stroke="#357cf8" strokeWidth="7">
            <path d="M3.500 20v32q0 4 4 4h53q4 0 4-4V20" />
            <path d="M34 41V5M20.500 19L34 5l13.500 14" strokeWidth="6" />
          </svg>
          卖
        </Action>
        <Action>撤</Action>
        <Action>查</Action>
        <Action last>
          <Tool>
            <CatIcon />
            <ToolLabel>工具</ToolLabel>
            <NewBadge>NEW</NewBadge>
          </Tool>
        </Action>
      </Actions>

      <NavBar>
        <svg width="48" height="54" fill="none" stroke="#d0d0d0" strokeWidth="4" strokeLinejoin="round">
          <path d="M3 27L44 3v48z" />
        </svg>
        <svg width="54" height="54" fill="none" stroke="#d0d0d0" strokeWidth="4">
          <circle cx="27" cy="27" r="24" />
        </svg>
        <svg width="48" height="50" fill="none" stroke="#d0d0d0" strokeWidth="4">
          <rect x="2" y="2" width="44" height="46" rx="2" />
        </svg>
      </NavBar>
    </Screen>
  )
}
